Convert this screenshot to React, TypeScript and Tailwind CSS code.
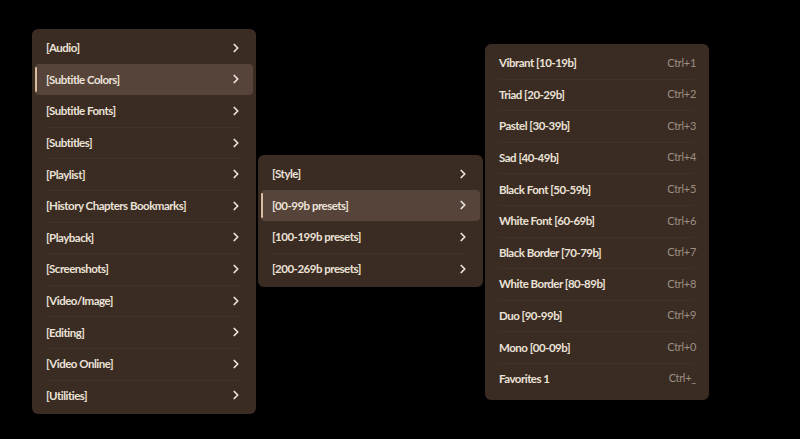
import { ChevronRight } from 'lucide-react';

const mainItems = [
  '[Audio]',
  '[Subtitle Colors]',
  '[Subtitle Fonts]',
  '[Subtitles]',
  '[Playlist]',
  '[History Chapters Bookmarks]',
  '[Playback]',
  '[Screenshots]',
  '[Video/Image]',
  '[Editing]',
  '[Video Online]',
  '[Utilities]',
];

const colorItems = ['[Style]', '[00-99b presets]', '[100-199b presets]', '[200-269b presets]'];

const presets: [string, string][] = [
  ['Vibrant [10-19b]', 'Ctrl+1'],
  ['Triad [20-29b]', 'Ctrl+2'],
  ['Pastel [30-39b]', 'Ctrl+3'],
  ['Sad [40-49b]', 'Ctrl+4'],
  ['Black Font [50-59b]', 'Ctrl+5'],
  ['White Font [60-69b]', 'Ctrl+6'],
  ['Black Border [70-79b]', 'Ctrl+7'],
  ['White Border [80-89b]', 'Ctrl+8'],
  ['Duo [90-99b]', 'Ctrl+9'],
  ['Mono [00-09b]', 'Ctrl+0'],
  ['Favorites 1', 'Ctrl+_'],
];

function Row({ label, active, first, children }: { label: string; active?: boolean; first?: boolean; children: React.ReactNode }) {
  return (
    <div className="relative h-[31.6px]">
      {!first && <div className="absolute top-0 left-[11px] right-[12px] h-px bg-[#403228]" />}
      <div
        className={`relative flex h-full items-center justify-between rounded-[4px] pl-[11px] ${
          active ? 'bg-[#56443a]' : ''
        }`}
      >
        {active && <div className="absolute left-0 top-[3px] bottom-[3px] w-[2px] rounded-full bg-[#d9bc9e]" />}
        <span className="text-[11.5px] font-bold tracking-[-0.5px] text-[#ebe2d8]">{label}</span>
        {children}
      </div>
    </div>
  );
}

function Chevron() {
  return <ChevronRight size={14} strokeWidth={3} className="mr-[10px] text-[#ece4dc]" />;
}

export default function App() {
  return (
    <div
      className="flex h-[439px] w-[800px] items-start bg-black"
      style={{ fontFamily: 'Lato, "Noto Sans", sans-serif' }}
    >
      <div className="ml-[32px] mt-[29px] w-[224px] rounded-[6px] bg-[#3a2c22] p-[3px]">
        {mainItems.map((m, i) => (
          <Row key={m} label={m} active={i === 1} first={i === 0 || i === 1 || i === 2}>
            <Chevron />
          </Row>
        ))}
      </div>
      <div className="ml-[2px] mt-[155px] w-[225px] rounded-[6px] bg-[#3a2c22] p-[3px]">
        {colorItems.map((m, i) => (
          <Row key={m} label={m} active={i === 1} first={i <= 2}>
            <Chevron />
          </Row>
        ))}
      </div>
      <div className="ml-[2px] mt-[44px] w-[224px] rounded-[6px] bg-[#3a2c22] p-[3px] pb-[5px]">
        {presets.map(([l, k], i) => (
          <Row key={l} label={l} first={i === 0}>
            <span className="mr-[10px] text-[11px] tracking-[-0.3px] text-[#9c8f84]">{k}</span>
          </Row>
        ))}
      </div>
    </div>
  );
}
